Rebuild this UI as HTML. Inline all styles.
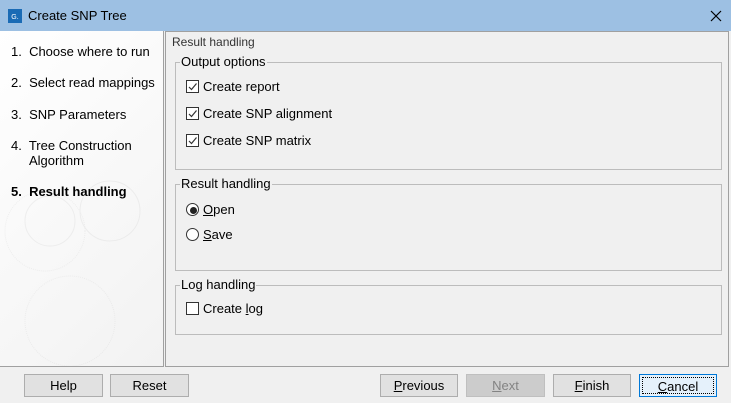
<!DOCTYPE html>
<html><head><style>
*{box-sizing:border-box;margin:0;padding:0}
body{width:731px;height:403px;background:#f0f0f0;font-family:"Liberation Sans",Arial,sans-serif;font-size:13px;color:#000;position:relative;overflow:hidden}
.abs{position:absolute}
.title{left:0;top:0;width:731px;height:31px;background:#9dc0e3}
.left{left:0;top:31px;width:164px;height:336px;background:linear-gradient(135deg,#fff,#f2f2f2);border-right:1px solid #a0a0a0;border-bottom:1px solid #a0a0a0}
.right{left:165px;top:31px;width:564px;height:336px;border-left:1px solid #a0a0a0;border-right:1px solid #a0a0a0;border-bottom:1px solid #a0a0a0;border-top:1px solid #a0a0a0}
.step{position:absolute;left:11px;font-size:13px}
.grp{position:absolute;border:1px solid #bcbcbc;left:175px;width:547px}
.lg{position:absolute;top:-9px;left:4px;background:#f0f0f0;padding:0 1px}
.cb{position:absolute;width:13px;height:13px;border:1px solid #333;background:#fff}
.rb{position:absolute;width:13px;height:13px;border:1px solid #333;border-radius:50%;background:#fff}
.btn{position:absolute;top:374px;height:23px;background:#e1e1e1;border:1px solid #adadad;text-align:center;line-height:21px}
</style></head><body>
<div class="abs title">
<div class="abs" style="left:8px;top:9px;width:14px;height:14px;background:#1a6bb5;color:#fff;font-size:7px;line-height:18px;text-align:center">G.</div>
<div class="abs" style="left:28px;top:8px;font-size:13px">Create SNP Tree</div>
<svg class="abs" style="left:710px;top:10px" width="12" height="12"><path d="M1 1L11 11M11 1L1 11" stroke="#000" stroke-width="1.2"/></svg>
</div>
<div class="abs left">
<svg class="abs" style="left:0;top:140px" width="160" height="195" opacity="0.18" fill="none" stroke="#bbb">
<circle cx="45" cy="60" r="40" stroke-dasharray="1 1"/><circle cx="50" cy="50" r="25"/><circle cx="70" cy="150" r="45" stroke-dasharray="1 1"/><circle cx="110" cy="40" r="30"/>
</svg>
<div class="step" style="top:13px">1.&nbsp; Choose where to run</div>
<div class="step" style="top:44px">2.&nbsp; Select read mappings</div>
<div class="step" style="top:76px">3.&nbsp; SNP Parameters</div>
<div class="step" style="top:107px">4.&nbsp; Tree Construction<br><span style="padding-left:18px">Algorithm</span></div>
<div class="step" style="top:153px;font-weight:bold">5.&nbsp; Result handling</div>
</div>
<div class="abs right"></div>
<div class="abs" style="left:172px;top:35px;font-size:12px;color:#333">Result handling</div>
<div class="grp" style="top:62px;height:108px"><div class="lg">Output options</div></div>
<div class="cb" style="left:186px;top:80px"></div><svg class="abs" style="left:187px;top:81px" width="11" height="11"><path d="M2 6L4.5 8.5L9.5 2.5" stroke="#333" fill="none" stroke-width="1.2"/></svg>
<div class="abs" style="left:203px;top:79px">Create report</div>
<div class="cb" style="left:186px;top:107px"></div><svg class="abs" style="left:187px;top:108px" width="11" height="11"><path d="M2 6L4.5 8.5L9.5 2.5" stroke="#333" fill="none" stroke-width="1.2"/></svg>
<div class="abs" style="left:203px;top:106px">Create SNP alignment</div>
<div class="cb" style="left:186px;top:134px"></div><svg class="abs" style="left:187px;top:135px" width="11" height="11"><path d="M2 6L4.5 8.5L9.5 2.5" stroke="#333" fill="none" stroke-width="1.2"/></svg>
<div class="abs" style="left:203px;top:133px">Create SNP matrix</div>
<div class="grp" style="top:184px;height:87px"><div class="lg">Result handling</div></div>
<div class="rb" style="left:186px;top:203px"></div><div class="abs" style="left:190px;top:207px;width:7px;height:7px;border-radius:50%;background:#222"></div>
<div class="abs" style="left:203px;top:202px"><u>O</u>pen</div>
<div class="rb" style="left:186px;top:228px"></div>
<div class="abs" style="left:203px;top:227px"><u>S</u>ave</div>
<div class="grp" style="top:285px;height:50px"><div class="lg">Log handling</div></div>
<div class="cb" style="left:186px;top:302px"></div>
<div class="abs" style="left:203px;top:301px">Create <u>l</u>og</div>
<div class="btn" style="left:24px;width:79px">Help</div>
<div class="btn" style="left:110px;width:79px">Reset</div>
<div class="btn" style="left:380px;width:78px"><u>P</u>revious</div>
<div class="btn" style="left:466px;width:79px;background:#cccccc;border-color:#bfbfbf;color:#838383"><u>N</u>ext</div>
<div class="btn" style="left:553px;width:78px"><u>F</u>inish</div>
<div class="btn" style="left:639px;width:78px;border:1px solid #0078d7;background:#e5f1fb"><div style="position:absolute;inset:2px;border:1px dotted #000;line-height:17px"><u>C</u>ancel</div></div>
</body></html>
